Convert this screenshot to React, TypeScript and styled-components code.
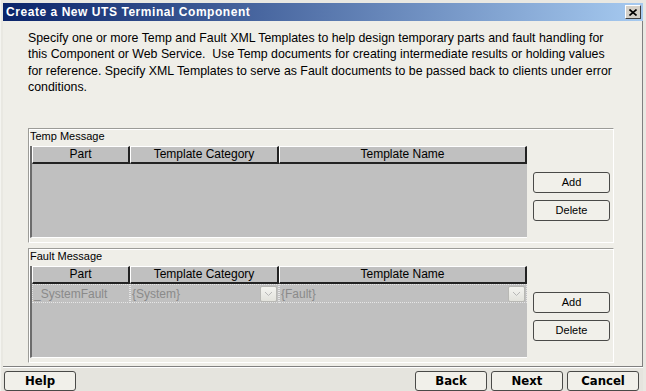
import React from 'react';
import styled, { createGlobalStyle } from 'styled-components';

const GlobalStyle = createGlobalStyle`
  html, body {
    margin: 0;
    padding: 0;
    background: #d4d0c8;
  }
  body {
    font-family: 'Liberation Sans', Arial, sans-serif;
  }
`;

const columns = [
  { title: 'Part', width: 98 },
  { title: 'Template Category', width: 149 },
  { title: 'Template Name', width: 248 },
];

type Row = { part: string; category: string; name: string };

function Chevron() {
  return (
    <svg width="9" height="6" viewBox="0 0 9 6">
      <path d="M1 1 L4.5 4.5 L8 1" fill="none" stroke="#b8b8b8" strokeWidth="1" />
    </svg>
  );
}

function MessagePanel({ title, rows }: { title: string; rows: Row[] }) {
  return (
    <Panel>
      <PanelLabel>{title}</PanelLabel>
      <PanelRow>
        <Table>
          <HeaderRow>
            {columns.map((c) => (
              <HeaderCell key={c.title} $width={c.width}>
                {c.title}
              </HeaderCell>
            ))}
          </HeaderRow>
          {rows.map((r) => (
            <DataRow key={r.part}>
              <DataCell $width={columns[0].width}>{r.part}</DataCell>
              <DataCell $width={columns[1].width}>
                <span>{r.category}</span>
                <DropButton>
                  <Chevron />
                </DropButton>
              </DataCell>
              <DataCell $width={columns[2].width}>
                <span>{r.name}</span>
                <DropButton>
                  <Chevron />
                </DropButton>
              </DataCell>
            </DataRow>
          ))}
        </Table>
        <ButtonColumn>
          <PanelButton>Add</PanelButton>
          <PanelButton>Delete</PanelButton>
        </ButtonColumn>
      </PanelRow>
    </Panel>
  );
}

export default function App() {
  return (
    <>
      <GlobalStyle />
      <Window>
        <TitleBar>
          <TitleText>Create a New UTS Terminal Component</TitleText>
          <CloseButton>
            <svg width="8" height="7" viewBox="0 0 8 7">
              <path d="M0.5 0.5 L7.5 6.5 M7.5 0.5 L0.5 6.5" stroke="#000" strokeWidth="1.6" />
            </svg>
          </CloseButton>
        </TitleBar>
        <Body>
          <Description>
            Specify one or more Temp and Fault XML Templates to help design temporary parts and fault handling for
            <br />
            this Component or Web Service.&nbsp; Use Temp documents for creating intermediate results or holding values
            <br />
            for reference. Specify XML Templates to serve as Fault documents to be passed back to clients under error
            <br />
            conditions.
          </Description>
          <Panels>
            <MessagePanel title="Temp Message" rows={[]} />
            <MessagePanel
              title="Fault Message"
              rows={[{ part: '_SystemFault', category: '{System}', name: '{Fault}' }]}
            />
          </Panels>
        </Body>
        <Footer>
          <WizardButton>Help</WizardButton>
          <Spacer />
          <WizardButton>Back</WizardButton>
          <WizardButton>Next</WizardButton>
          <WizardButton>Cancel</WizardButton>
        </Footer>
      </Window>
    </>
  );
}

const Window = styled.div`
  width: 646px;
  height: 391px;
  box-sizing: border-box;
  padding: 3px 3px 0 2px;
  background: #e9e8e2;
  border-left: 1px solid #f4f4f0;
  display: flex;
  flex-direction: column;
  overflow: hidden;
`;

const TitleBar = styled.div`
  height: 18px;
  flex: none;
  display: flex;
  align-items: center;
  justify-content: space-between;
  padding: 0 2px 0 3px;
  background: linear-gradient(to right, #0a246a, #a6caf0);
`;

const TitleText = styled.div`
  color: #fff;
  font-weight: bold;
  font-size: 12px;
  letter-spacing: 0.55px;
`;

const CloseButton = styled.div`
  width: 16px;
  height: 14px;
  box-sizing: border-box;
  background: #d4d0c8;
  border-top: 1px solid #fff;
  border-left: 1px solid #fff;
  border-right: 1px solid #404040;
  border-bottom: 1px solid #404040;
  display: flex;
  align-items: center;
  justify-content: center;
`;

const Body = styled.div`
  flex: 1;
  background: #efeee8;
  border-right: 1px solid #808080;
  border-bottom: 1px solid #808080;
  padding: 9px 28px 3px 25px;
  display: flex;
  flex-direction: column;
`;

const Description = styled.div`
  font-size: 12.35px;
  line-height: 16.3px;
  color: #000;
  white-space: nowrap;
`;

const Panels = styled.div`
  margin-top: 33px;
  display: flex;
  flex-direction: column;
  gap: 5px;
`;

const Panel = styled.div`
  height: 115px;
  box-sizing: border-box;
  border-top: 1px solid #9c9c98;
  border-left: 1px solid #9c9c98;
  border-right: 1px solid #fff;
  border-bottom: 1px solid #fff;
  box-shadow: inset 1px 1px 0 #fff;
  padding: 1px 3px 0 1px;
  display: flex;
  flex-direction: column;
`;

const PanelLabel = styled.div`
  height: 16px;
  font-size: 11px;
  line-height: 13px;
  color: #000;
`;

const PanelRow = styled.div`
  display: flex;
  align-items: flex-start;
`;

const Table = styled.div`
  width: 497px;
  height: 92px;
  box-sizing: border-box;
  background: #c0c0c0;
  border-left: 2px solid #6c6c6c;
  border-bottom: 1px solid #fff;
`;

const HeaderRow = styled.div`
  display: flex;
  height: 18px;
`;

const HeaderCell = styled.div<{ $width: number }>`
  width: ${(p) => p.$width}px;
  box-sizing: border-box;
  border-top: 1px solid #fff;
  border-left: 1px solid #fff;
  border-right: 2px solid #222;
  border-bottom: 2px solid #222;
  font-size: 12px;
  line-height: 15px;
  text-align: center;
  color: #000;
`;

const DataRow = styled.div`
  display: flex;
  height: 19px;
`;

const DataCell = styled.div<{ $width: number }>`
  width: ${(p) => p.$width}px;
  box-sizing: border-box;
  border: 1px dotted #e6e6e6;
  padding: 0 1px 0 1px;
  display: flex;
  align-items: center;
  justify-content: space-between;
  font-size: 12px;
  color: #8a8a8a;
`;

const DropButton = styled.div`
  width: 17px;
  height: 16px;
  box-sizing: border-box;
  border: 1px solid #b8b8b4;
  border-radius: 2px;
  background: linear-gradient(#f4f4f0, #e2e2dc);
  display: flex;
  align-items: center;
  justify-content: center;
`;

const ButtonColumn = styled.div`
  width: 77px;
  margin-left: 6px;
  padding-top: 26px;
  display: flex;
  flex-direction: column;
  gap: 7px;
`;

const PanelButton = styled.div`
  height: 21px;
  box-sizing: border-box;
  border: 1px solid #4a4a48;
  border-radius: 3px;
  background: #f1f0ea;
  font-size: 11px;
  line-height: 19px;
  text-align: center;
  color: #000;
`;

const Footer = styled.div`
  height: 24px;
  flex: none;
  box-sizing: border-box;
  padding: 3px 4px 0 1px;
  background: #e5e4de;
  border-top: 1px solid #fff;
  display: flex;
  align-items: flex-start;
  gap: 4px;
`;

const Spacer = styled.div`
  flex: 1;
`;

const WizardButton = styled.div`
  width: 72px;
  height: 20px;
  box-sizing: border-box;
  border: 1px solid #4a4a48;
  border-radius: 3px;
  background: #f1f0ea;
  font-family: 'Liberation Sans Narrow', 'DejaVu Sans Condensed', 'Liberation Sans', sans-serif;
  font-weight: bold;
  font-size: 13px;
  line-height: 18px;
  text-align: center;
  color: #000;
`;
